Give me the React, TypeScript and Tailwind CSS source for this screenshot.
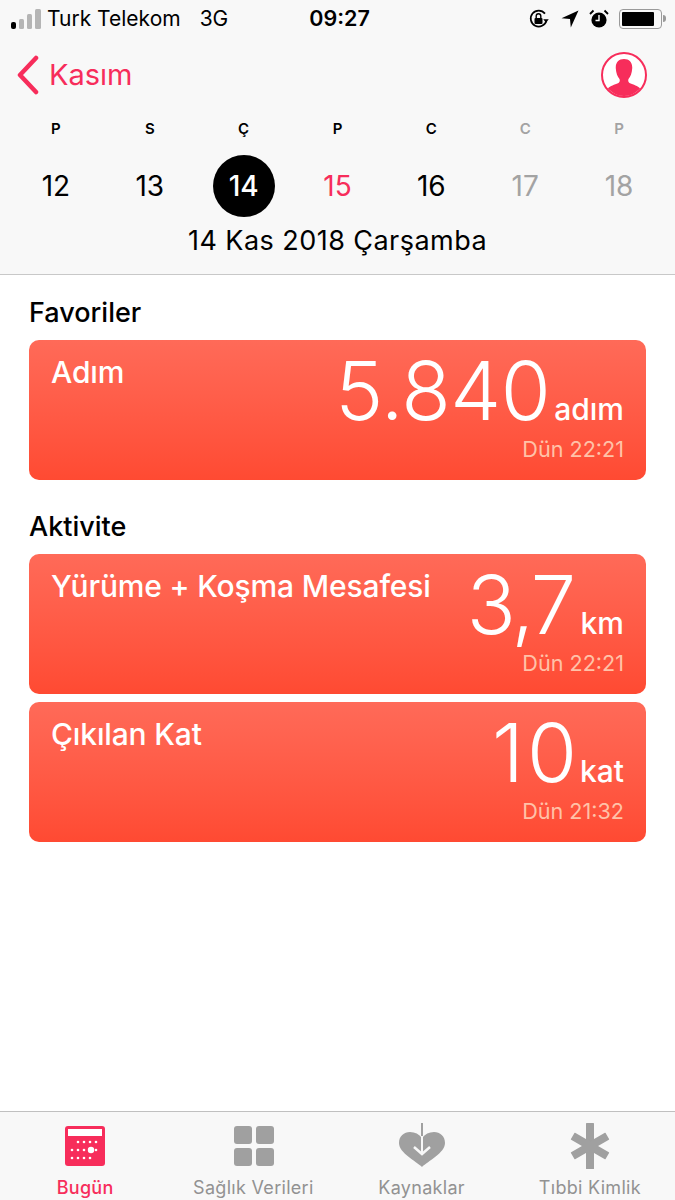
import React from "react";

const font = { fontFamily: "Inter, 'Liberation Sans', sans-serif" };

function Signal() {
  return (
    <svg width="30" height="20" viewBox="0 0 30 20" className="block">
      <rect x="0" y="13" width="5" height="7" rx="2" fill="#000" />
      <rect x="8" y="10" width="5" height="10" rx="1.5" fill="#b5b5b5" />
      <rect x="16" y="5" width="5" height="15" rx="1.5" fill="#b5b5b5" />
      <rect x="24" y="0" width="6" height="20" rx="1.5" fill="#b5b5b5" />
    </svg>
  );
}

function RotationLock() {
  return (
    <svg width="20" height="20" viewBox="0 0 20 20" className="mr-[2px]">
      <path d="M17.5 11.5A8 8 0 1 1 16 4.6" fill="none" stroke="#000" strokeWidth="1.7" />
      <path d="M14.2 10.2h5.6l-2.8 3.400z" fill="#000" />
      <rect x="5.500" y="9" width="8" height="6" rx="1" fill="#000" />
      <path d="M7.200 9V7a2.300 2.300 0 0 1 4.600 0v2" fill="none" stroke="#000" strokeWidth="1.400" />
    </svg>
  );
}

function Arrow() {
  return (
    <svg width="18" height="18" viewBox="0 0 18 18">
      <path d="M0.5 8.2 17.5 0.5 9.8 17.5 9 9z" fill="#000" />
    </svg>
  );
}

function Alarm() {
  return (
    <svg width="20" height="20" viewBox="0 0 20 20">
      <circle cx="10" cy="11" r="7.600" fill="#000" />
      <path d="M10 6v5.500H6.500" fill="none" stroke="#fff" strokeWidth="1.400" />
      <path d="M1 5 4.500 1.500M19 5l-3.500-3.500" stroke="#000" strokeWidth="1.800" />
    </svg>
  );
}

function Battery() {
  return (
    <div className="flex items-center">
      <div className="w-[43px] h-[20px] rounded-[4px] border-[1.5px] border-[#9a9a9a] p-[2px]">
        <div className="h-full w-[32px] bg-black rounded-[1px]" />
      </div>
      <div className="w-[3px] h-[7px] bg-[#9a9a9a] rounded-r-sm ml-[1px]" />
    </div>
  );
}

function Profile() {
  return (
    <svg width="46" height="46" viewBox="0 0 46 46">
      <defs>
        <clipPath id="pc">
          <circle cx="23" cy="23" r="21" />
        </clipPath>
      </defs>
      <circle cx="23" cy="23" r="22" fill="#fff" stroke="#f72d5b" strokeWidth="2" />
      <path
        clipPath="url(#pc)"
        d="M23 7c5.500 0 8.600 3.600 8.200 9.500-.3 4.600-1.700 8.400-3.700 10.400-.6 1.800-.3 3.400 1.500 4.400 3.300 1.500 8 2.500 10 5 1 1.500 1.500 5 1.500 9.700H5.500c0-4.700.5-8.200 1.500-9.700 2-2.500 6.700-3.500 10-5 1.800-1 2.100-2.600 1.500-4.400-2-2-3.400-5.800-3.700-10.400C14.400 10.600 17.500 7 23 7z"
        fill="#f72d5b"
      />
    </svg>
  );
}

const days = [
  { l: "P", d: "12", lc: "text-black", dc: "text-black" },
  { l: "S", d: "13", lc: "text-black", dc: "text-black" },
  { l: "Ç", d: "14", lc: "text-black", dc: "text-white", sel: true },
  { l: "P", d: "15", lc: "text-black", dc: "text-[#f72d5b]" },
  { l: "C", d: "16", lc: "text-black", dc: "text-black" },
  { l: "C", d: "17", lc: "text-[#a3a3a3]", dc: "text-[#a3a3a3]" },
  { l: "P", d: "18", lc: "text-[#a3a3a3]", dc: "text-[#a3a3a3]" },
];

function Card({
  title,
  value,
  unit,
  time,
  valueClass,
  unitClass,
}: {
  title: string;
  value: string;
  unit: string;
  time: string;
  valueClass: string;
  unitClass: string;
}) {
  return (
    <div className="h-[140px] rounded-[10px] bg-gradient-to-b from-[#ff6a58] to-[#ff4a32] pl-[22px] pr-[22px] flex justify-between text-white">
      <div className="text-[30px] leading-[34px] font-medium mt-[15px] tracking-[-0.15px]">{title}</div>
      <div className="flex flex-col items-end">
        <div className="flex items-baseline h-[98px] -mt-[1px]">
          <span className={`text-[81px] leading-[104px] font-light ${valueClass}`}>{value}</span>
          <span className={`text-[30px] font-medium leading-[34px] ${unitClass}`}>{unit}</span>
        </div>
        <div className="text-[21.600px] leading-[26px] text-[#ffc2a8] -mt-[1px]">{time}</div>
      </div>
    </div>
  );
}

function Tab({
  icon,
  label,
  active,
}: {
  icon: React.ReactNode;
  label: string;
  active?: boolean;
}) {
  return (
    <div className="flex flex-col items-center">
      <div className="h-[46px] mt-[11px] flex items-center justify-center">{icon}</div>
      <div
        className={`text-[18px] leading-[22px] mt-[8px] tracking-[0.3px] ${
          active ? "text-[#f72d5b] font-medium" : "text-[#929292]"
        }`}
      >
        {label}
      </div>
    </div>
  );
}

export default function App() {
  return (
    <div style={font} className="w-[675px] h-[1200px] bg-white flex flex-col overflow-hidden">
      <header className="h-[275px] bg-[#f8f8f8] border-b border-[#c8c8c8] shrink-0 flex flex-col">
        <div className="h-[37px] flex items-center pl-[11px] pr-[9px] text-[21px] text-black">
          <div className="flex items-center gap-[6px] flex-1">
            <Signal />
            <span className="whitespace-nowrap">Turk Telekom</span>
            <span className="ml-[13px]">3G</span>
          </div>
          <div className="font-semibold text-[21.500px] ml-[2px]">09:27</div>
          <div className="flex items-center gap-[10px] flex-1 justify-end">
            <RotationLock />
            <Arrow />
            <Alarm />
            <Battery />
          </div>
        </div>
        <div className="h-[74px] flex items-center justify-between pl-[16px] pr-[28px] mt-[1px]">
          <div className="flex items-center gap-[10px] text-[#f72d5b]">
            <svg width="24" height="40" viewBox="0 0 24 40">
              <path
                d="M20 3 4 20l16 17"
                fill="none"
                stroke="#f72d5b"
                strokeWidth="4.500"
                strokeLinecap="round"
                strokeLinejoin="round"
              />
            </svg>
            <span className="text-[29px] -ml-[1px]">Kasım</span>
          </div>
          <Profile />
        </div>
        <div className="grid grid-cols-7 px-[9px] mt-[7px]">
          {days.map((x, i) => (
            <div key={i} className="flex flex-col items-center">
              <div className={`text-[15px] leading-[20px] font-semibold ${x.lc}`}>{x.l}</div>
              <div
                className={`mt-[16px] w-[62px] h-[62px] rounded-full flex items-center justify-center text-[28px] ${x.dc} ${
                  x.sel ? "bg-black font-medium" : ""
                }`}
              >
                {x.d}
              </div>
            </div>
          ))}
        </div>
        <div className="text-center text-[27px] leading-[34px] text-black mt-[7px] tracking-[0.45px]">
          14 Kas 2018 Çarşamba
        </div>
      </header>

      <main className="flex-1 px-[29px]">
        <h2 className="text-[27px] leading-[32px] font-medium text-black mt-[22px] mb-[11px]">Favoriler</h2>
        <Card
          title="Adım"
          value="5.840"
          unit="adım"
          time="Dün 22:21"
          valueClass="tracking-[-0.5px]"
          unitClass="ml-[4px]"
        />
        <h2 className="text-[27px] leading-[32px] font-medium text-black mt-[31px] mb-[11px]">Aktivite</h2>
        <div className="flex flex-col gap-[8px]">
          <Card
            title="Yürüme + Koşma Mesafesi"
            value="3,7"
            unit="km"
            time="Dün 22:21"
            valueClass="tracking-[-2.5px]"
            unitClass="ml-[7px]"
          />
          <Card
            title="Çıkılan Kat"
            value="10"
            unit="kat"
            time="Dün 21:32"
            valueClass="tracking-[3px]"
            unitClass="ml-0"
          />
        </div>
      </main>

      <nav className="h-[89px] shrink-0 bg-[#f8f8f8] border-t border-[#c0c0c0] grid grid-cols-4 px-[1px]">
        <Tab
          active
          label="Bugün"
          icon={
            <svg width="40" height="40" viewBox="0 0 40 40">
              <rect width="40" height="40" rx="3" fill="#f72d5b" />
              <rect x="3" y="3" width="34" height="7" fill="#fff" />
              {[[13, 16], [19, 16], [25, 16], [31, 16], [7, 24], [13, 24], [19, 24], [31, 24], [7, 32], [13, 32], [19, 32], [25, 32]].map(
                ([cx, cy], i) => (
                  <circle key={i} cx={cx} cy={cy} r="1.300" fill="#fff" />
                ),
              )}
              <circle cx="26" cy="24" r="3.200" fill="#fff" />
            </svg>
          }
        />
        <Tab
          label="Sağlık Verileri"
          icon={
            <div className="grid grid-cols-2 gap-[4px] ml-[2px]">
              <div className="w-[18px] h-[18px] rounded-[3px] bg-[#a0a0a0]" />
              <div className="w-[18px] h-[18px] rounded-[3px] bg-[#a0a0a0]" />
              <div className="w-[18px] h-[18px] rounded-[3px] bg-[#a0a0a0]" />
              <div className="w-[18px] h-[18px] rounded-[3px] bg-[#a0a0a0]" />
            </div>
          }
        />
        <Tab
          label="Kaynaklar"
          icon={
            <svg width="46" height="46" viewBox="0 0 46 46">
              <path
                d="M23 44C17 38 0 30 0 20 0 13 5 9 11 9c5 0 9 2 12 6 3-4 7-6 12-6 6 0 11 4 11 11 0 10-17 18-23 24z"
                fill="#a0a0a0"
              />
              <path d="M23 0V30" stroke="#a0a0a0" strokeWidth="2" />
              <path d="M23 13V30" stroke="#f8f8f8" strokeWidth="2" />
              <path d="M15 24l8 7 8-7" fill="none" stroke="#f8f8f8" strokeWidth="2.500" />
            </svg>
          }
        />
        <Tab
          label="Tıbbi Kimlik"
          icon={
            <svg width="44" height="46" viewBox="0 0 44 46">
              <g fill="#a0a0a0">
                <rect x="18" y="0" width="8" height="46" rx="0.500" />
                <rect x="18" y="3" width="8" height="40" rx="0.500" transform="rotate(60 22 23)" />
                <rect x="18" y="3" width="8" height="40" rx="0.500" transform="rotate(-60 22 23)" />
              </g>
            </svg>
          }
        />
      </nav>
    </div>
  );
}
